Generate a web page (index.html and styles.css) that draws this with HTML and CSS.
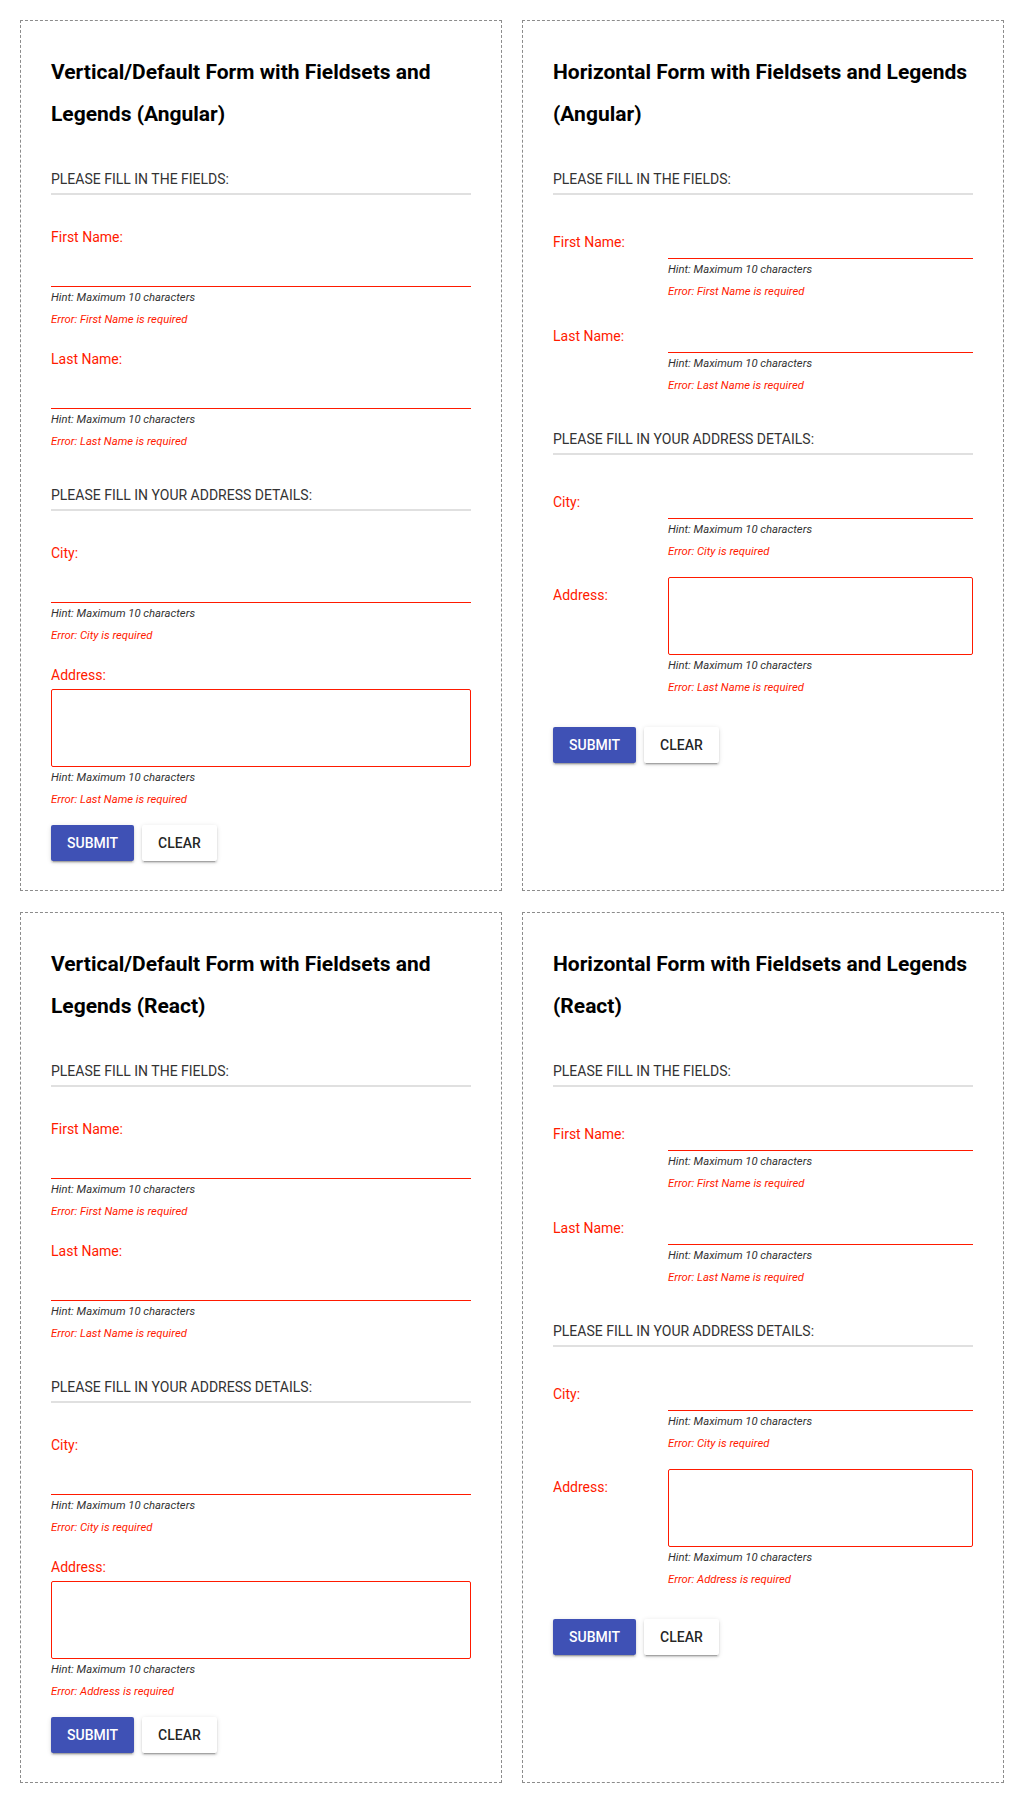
FILE: index.html
```html
<!DOCTYPE html>
<html lang="en">
<head>
<meta charset="utf-8">
<title>Forms with Fieldsets and Legends</title>
<link rel="stylesheet" href="styles.css">
</head>
<body>
<div class="page">

  <!-- Vertical Angular -->
  <form class="card">
    <h2 class="title">Vertical/Default Form with Fieldsets and Legends (Angular)</h2>
    <div class="section">
      <div class="legend">Please fill in the fields:</div>
      <div class="field">
        <label class="label">First Name:</label>
        <input class="input" type="text">
        <div class="hint">Hint: Maximum 10 characters</div>
        <div class="error">Error: First Name is required</div>
      </div>
      <div class="field">
        <label class="label">Last Name:</label>
        <input class="input" type="text">
        <div class="hint">Hint: Maximum 10 characters</div>
        <div class="error">Error: Last Name is required</div>
      </div>
    </div>
    <div class="section">
      <div class="legend">Please fill in your address details:</div>
      <div class="field">
        <label class="label">City:</label>
        <input class="input" type="text">
        <div class="hint">Hint: Maximum 10 characters</div>
        <div class="error">Error: City is required</div>
      </div>
      <div class="field">
        <label class="label label--area">Address:</label>
        <textarea class="area"></textarea>
        <div class="hint">Hint: Maximum 10 characters</div>
        <div class="error">Error: Last Name is required</div>
      </div>
    </div>
    <div class="actions">
      <button type="button" class="btn btn--primary">Submit</button>
      <button type="button" class="btn">Clear</button>
    </div>
  </form>

  <!-- Horizontal Angular -->
  <form class="card">
    <h2 class="title">Horizontal Form with Fieldsets and Legends (Angular)</h2>
    <div class="section">
      <div class="legend">Please fill in the fields:</div>
      <div class="hfield">
        <label class="label hlabel">First Name:</label>
        <div class="control">
          <input class="input input--short" type="text">
          <div class="hint">Hint: Maximum 10 characters</div>
          <div class="error">Error: First Name is required</div>
        </div>
      </div>
      <div class="hfield">
        <label class="label hlabel">Last Name:</label>
        <div class="control">
          <input class="input input--short" type="text">
          <div class="hint">Hint: Maximum 10 characters</div>
          <div class="error">Error: Last Name is required</div>
        </div>
      </div>
    </div>
    <div class="section">
      <div class="legend">Please fill in your address details:</div>
      <div class="hfield">
        <label class="label hlabel">City:</label>
        <div class="control">
          <input class="input input--short" type="text">
          <div class="hint">Hint: Maximum 10 characters</div>
          <div class="error">Error: City is required</div>
        </div>
      </div>
      <div class="hfield hfield--area">
        <label class="label hlabel hlabel--area">Address:</label>
        <div class="control">
          <textarea class="area"></textarea>
          <div class="hint">Hint: Maximum 10 characters</div>
          <div class="error">Error: Last Name is required</div>
        </div>
      </div>
    </div>
    <div class="actions actions--h">
      <button type="button" class="btn btn--primary">Submit</button>
      <button type="button" class="btn">Clear</button>
    </div>
  </form>

  <!-- Vertical React -->
  <form class="card">
    <h2 class="title">Vertical/Default Form with Fieldsets and Legends (React)</h2>
    <div class="section">
      <div class="legend">Please fill in the fields:</div>
      <div class="field">
        <label class="label">First Name:</label>
        <input class="input" type="text">
        <div class="hint">Hint: Maximum 10 characters</div>
        <div class="error">Error: First Name is required</div>
      </div>
      <div class="field">
        <label class="label">Last Name:</label>
        <input class="input" type="text">
        <div class="hint">Hint: Maximum 10 characters</div>
        <div class="error">Error: Last Name is required</div>
      </div>
    </div>
    <div class="section">
      <div class="legend">Please fill in your address details:</div>
      <div class="field">
        <label class="label">City:</label>
        <input class="input" type="text">
        <div class="hint">Hint: Maximum 10 characters</div>
        <div class="error">Error: City is required</div>
      </div>
      <div class="field">
        <label class="label label--area">Address:</label>
        <textarea class="area"></textarea>
        <div class="hint">Hint: Maximum 10 characters</div>
        <div class="error">Error: Address is required</div>
      </div>
    </div>
    <div class="actions">
      <button type="button" class="btn btn--primary">Submit</button>
      <button type="button" class="btn">Clear</button>
    </div>
  </form>

  <!-- Horizontal React -->
  <form class="card">
    <h2 class="title">Horizontal Form with Fieldsets and Legends (React)</h2>
    <div class="section">
      <div class="legend">Please fill in the fields:</div>
      <div class="hfield">
        <label class="label hlabel">First Name:</label>
        <div class="control">
          <input class="input input--short" type="text">
          <div class="hint">Hint: Maximum 10 characters</div>
          <div class="error">Error: First Name is required</div>
        </div>
      </div>
      <div class="hfield">
        <label class="label hlabel">Last Name:</label>
        <div class="control">
          <input class="input input--short" type="text">
          <div class="hint">Hint: Maximum 10 characters</div>
          <div class="error">Error: Last Name is required</div>
        </div>
      </div>
    </div>
    <div class="section">
      <div class="legend">Please fill in your address details:</div>
      <div class="hfield">
        <label class="label hlabel">City:</label>
        <div class="control">
          <input class="input input--short" type="text">
          <div class="hint">Hint: Maximum 10 characters</div>
          <div class="error">Error: City is required</div>
        </div>
      </div>
      <div class="hfield hfield--area">
        <label class="label hlabel hlabel--area">Address:</label>
        <div class="control">
          <textarea class="area"></textarea>
          <div class="hint">Hint: Maximum 10 characters</div>
          <div class="error">Error: Address is required</div>
        </div>
      </div>
    </div>
    <div class="actions actions--h">
      <button type="button" class="btn btn--primary">Submit</button>
      <button type="button" class="btn">Clear</button>
    </div>
  </form>

</div>
</body>
</html>
```

FILE: styles.css
```css
* {
  box-sizing: border-box;
}

html, body {
  margin: 0;
  padding: 0;
  background: #ffffff;
}

body {
  font-family: Roboto, "Liberation Sans", Arial, sans-serif;
  font-size: 14px;
  color: #333333;
}

.page {
  display: grid;
  grid-template-columns: 1fr 1fr;
  column-gap: 20px;
  row-gap: 21px;
  padding: 20px;
}

.card {
  border: 1px dashed #8c8c8c;
  padding: 30px 30px 29px;
  margin: 0;
}

.title {
  margin: 0 0 33.7px;
  font-size: 21px;
  line-height: 42px;
  font-weight: 700;
  color: #000000;
}

.section + .section {
  margin-top: 32px;
}

.legend {
  font-size: 14px;
  line-height: 20px;
  text-transform: uppercase;
  color: #333333;
  padding-bottom: 4.5px;
  border-bottom: 2px solid #e0e0e0;
  margin-bottom: 31.5px;
}

.field + .field {
  margin-top: 18px;
}

.label {
  display: block;
  font-size: 14px;
  line-height: 20px;
  color: #ff1a00;
}

.label--area {
  margin-bottom: 4.4px;
}

.input {
  display: block;
  width: 100%;
  height: 40px;
  margin: 0;
  padding: 0;
  border: 0;
  border-bottom: 1px solid #ff1a00;
  background: transparent;
  font: inherit;
  outline: none;
}

.input--short {
  height: 32px;
}

.area {
  display: block;
  width: 100%;
  height: 78px;
  margin: 0;
  padding: 4px;
  border: 1px solid #ff1a00;
  border-radius: 2px;
  background: transparent;
  font: inherit;
  resize: none;
  outline: none;
}

.hint,
.error {
  font-size: 11.3px;
  line-height: 22px;
  font-style: italic;
}

.hint {
  color: #333333;
}

.error {
  color: #ff1a00;
}

.hfield {
  display: grid;
  grid-template-columns: 115px 1fr;
  align-items: start;
}

.hfield + .hfield {
  margin-top: 18px;
}

.hfield + .hfield--area {
  margin-top: 14.3px;
}

.hlabel {
  padding-top: 5px;
}

.hlabel--area {
  padding-top: 8.4px;
}

.control {
  min-width: 0;
}

.actions {
  display: flex;
  gap: 8px;
  margin-top: 14px;
}

.actions--h {
  margin-top: 27.7px;
}

.btn {
  height: 36px;
  padding: 0 16px;
  border: 0;
  border-radius: 2px;
  background: #ffffff;
  color: rgba(0, 0, 0, 0.87);
  font-family: Roboto, "Liberation Sans", Arial, sans-serif;
  font-size: 14px;
  font-weight: 500;
  text-transform: uppercase;
  box-shadow: 0 3px 1px -2px rgba(0, 0, 0, 0.2), 0 2px 2px 0 rgba(0, 0, 0, 0.14), 0 1px 5px 0 rgba(0, 0, 0, 0.12);
  cursor: pointer;
}

.btn--primary {
  background: #3f51b5;
  color: #ffffff;
}
```
